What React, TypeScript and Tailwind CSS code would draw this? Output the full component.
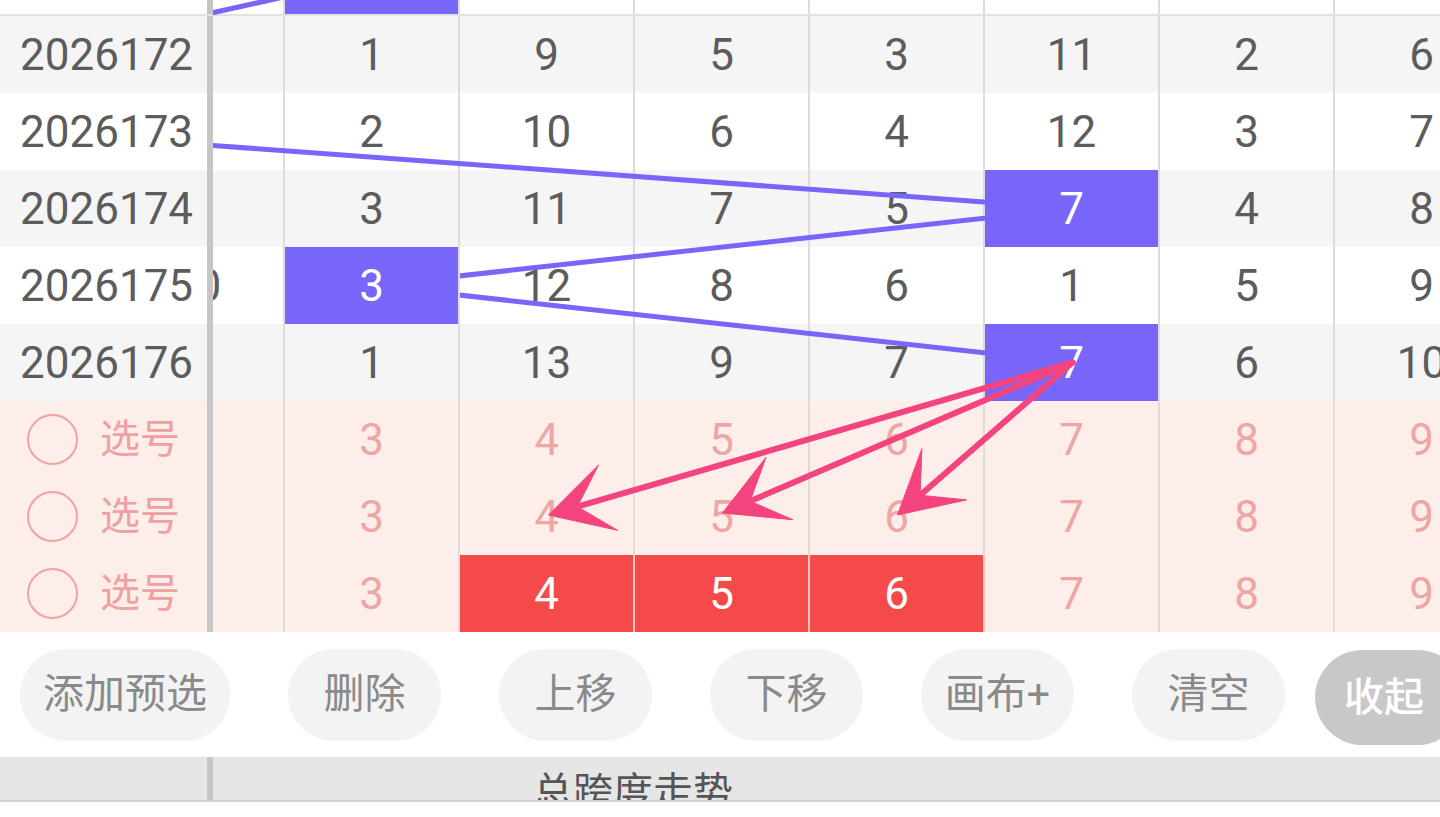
import React from 'react';

type Tone = 'plain' | 'purple' | 'red';
type Cell = { v: string; tone?: Tone };

const c = (v: string | number, tone: Tone = 'plain'): Cell => ({ v: String(v), tone });

// geometry of the chart body, used by the trend lines
const LABEL_W = 213; // label column + divider
const COL_W = 175;
const FIRST_COL_X = 285; // left edge of column 1 on screen
const ROW_H = 77;
const FIRST_ROW_Y = 16;

const colX = (col: number) => FIRST_COL_X + COL_W * (col - 1) + COL_W / 2 - LABEL_W;
const rowY = (row: number) => FIRST_ROW_Y + ROW_H * row + ROW_H / 2;

const drawRows = [
  { issue: '2026172', bg: 'bg-[#f5f5f5]', cells: ['', 1, 9, 5, 3, 11, 2, 6].map((n) => c(n)) },
  { issue: '2026173', bg: 'bg-white', cells: ['', 2, 10, 6, 4, 12, 3, 7].map((n) => c(n)) },
  { issue: '2026174', bg: 'bg-[#f5f5f5]', cells: [c(''), c(3), c(11), c(7), c(5), c(7, 'purple'), c(4), c(8)] },
  { issue: '2026175', bg: 'bg-white', cells: [c(10), c(3, 'purple'), c(12), c(8), c(6), c(1), c(5), c(9)] },
  { issue: '2026176', bg: 'bg-[#f5f5f5]', cells: [c(''), c(1), c(13), c(9), c(7), c(7, 'purple'), c(6), c(10)] },
];

const pickRows: Cell[][] = [
  ['', 3, 4, 5, 6, 7, 8, 9].map((n) => c(n)),
  ['', 3, 4, 5, 6, 7, 8, 9].map((n) => c(n)),
  [c(''), c(3), c(4, 'red'), c(5, 'red'), c(6, 'red'), c(7), c(8), c(9)],
];

// winning positions as [column, row]; row -1 is the issue above 2026172
const trend: [number, number][] = [
  [1, -1],
  [-1, 0],
  [-1, 1],
  [5, 2],
  [1, 3],
  [5, 4],
];

const arrowTargets: [number, number][] = [
  [colX(2) + 1, 515],
  [colX(3), 513],
  [colX(4), 515],
];

function arrowHead(sx: number, sy: number, tx: number, ty: number) {
  const dx = tx - sx;
  const dy = ty - sy;
  const len = Math.hypot(dx, dy);
  const ux = dx / len;
  const uy = dy / len;
  const px = -uy;
  const py = ux;
  const back = 62;
  const half = 34;
  const notch = 30;
  const bx = tx - ux * back;
  const by = ty - uy * back;
  const nx = tx - ux * notch;
  const ny = ty - uy * notch;
  return {
    shaftEnd: [nx, ny],
    points: `${tx},${ty} ${bx + px * half},${by + py * half} ${nx},${ny} ${bx - px * half},${by - py * half}`,
  };
}

function NumCell({ cell, pink }: { cell: Cell; pink?: boolean }) {
  let cls = pink ? 'text-[#eea6a4]' : 'text-[#5c5c5c]';
  let border = 'border-[#dcdcdc]';
  if (cell.tone === 'purple') {
    cls = 'relative z-10 bg-[#7766f9] text-white';
  } else if (cell.tone === 'red') {
    cls = 'bg-[#f54a4a] text-white';
    border = 'border-[#fac6c4]';
  }
  return (
    <div className={`w-[175px] shrink-0 h-full border-r-2 ${border} flex items-center justify-center ${cls}`}>
      {cell.v}
    </div>
  );
}

function Divider() {
  return <div className="w-[6px] shrink-0 self-stretch bg-[#c6c6c6]" />;
}

function Cells({ cells, pink }: { cells: Cell[]; pink?: boolean }) {
  return (
    <div className="flex-1 h-full overflow-hidden">
      <div className="flex h-full -ml-[103px]">
        {cells.map((cell, i) => (
          <NumCell key={i} cell={cell} pink={pink} />
        ))}
      </div>
    </div>
  );
}

export default function App() {
  const start: [number, number] = [colX(5), rowY(4)];
  const linePoints = trend.map(([col, row]) => `${colX(col)},${rowY(row)}`).join(' ');

  const buttons = ['删除', '上移', '下移', '画布+', '清空'];

  return (
    <div className="w-[1440px] h-[817px] overflow-hidden bg-white font-[Roboto,'Noto_Sans_CJK_SC',sans-serif] text-[44px] leading-none">
      {/* chart body */}
      <div className="relative">
        {/* tail of the previous issue */}
        <div className="flex h-[16px] border-b-2 border-[#e2e2e2] bg-white">
          <div className="w-[207px] shrink-0" />
          <Divider />
          <Cells cells={[c(''), c('', 'purple'), c(''), c(''), c(''), c(''), c(''), c('')]} />
        </div>

        {drawRows.map((row) => (
          <div key={row.issue} className={`flex h-[77px] ${row.bg}`}>
            <div className="w-[207px] shrink-0 flex items-center pl-[20px] text-[#5c5c5c]">{row.issue}</div>
            <Divider />
            <Cells cells={row.cells} />
          </div>
        ))}

        {pickRows.map((cells, i) => (
          <div key={i} className="flex h-[77px] bg-[#fdeeea]">
            <div className="w-[207px] shrink-0 flex items-center pl-[27px] gap-[22px]">
              <span className="w-[51px] h-[51px] rounded-full border-2 border-[#efa3a3]" />
              <span className="text-[40px] text-[#efa0a0]">选号</span>
            </div>
            <Divider />
            <Cells cells={cells} pink />
          </div>
        ))}

        {/* trend line, under the highlighted cells */}
        <svg
          className="absolute top-0 left-[213px] z-[5] pointer-events-none"
          width={1227}
          height={632}
        >
          <polyline points={linePoints} fill="none" stroke="#7766f9" strokeWidth={5} strokeLinejoin="round" />
        </svg>

        {/* prediction arrows */}
        <svg
          className="absolute top-0 left-[213px] z-20 pointer-events-none"
          width={1227}
          height={632}
        >
          {arrowTargets.map(([tx, ty], i) => {
            const head = arrowHead(start[0], start[1], tx, ty);
            return (
              <g key={i} fill="#f4447f" stroke="#f4447f">
                <line
                  x1={start[0]}
                  y1={start[1]}
                  x2={head.shaftEnd[0]}
                  y2={head.shaftEnd[1]}
                  strokeWidth={6}
                  strokeLinecap="round"
                />
                <polygon points={head.points} strokeWidth={1} strokeLinejoin="round" />
              </g>
            );
          })}
        </svg>
      </div>

      {/* toolbar */}
      <div className="flex items-center h-[125px] pl-[20px] overflow-hidden">
        <div className="flex gap-[58px]">
          <button className="w-[210px] h-[92px] rounded-full bg-[#f3f3f3] text-[#8a8a8a] text-[41px] flex items-center justify-center">
            添加预选
          </button>
          {buttons.map((label) => (
            <button
              key={label}
              className="w-[153px] h-[92px] rounded-full bg-[#f3f3f3] text-[#8a8a8a] text-[41px] flex items-center justify-center"
            >
              {label}
            </button>
          ))}
        </div>
        <button className="ml-[30px] mt-[6px] w-[150px] shrink-0 h-[95px] rounded-full bg-[#c8c8c8] text-white flex items-center justify-center">
          <span className="text-[40px] font-medium -ml-[12px]">收起</span>
        </button>
      </div>

      {/* next chart header */}
      <div className="flex h-[45px] bg-[#e6e6e6] border-b-2 border-[#d4d4d4]">
        <div className="w-[207px] shrink-0" />
        <Divider />
        <div className="flex-1 overflow-hidden pl-[320px] pt-[16px] text-[40px] text-[#555555]">总跨度走势</div>
      </div>
    </div>
  );
}
